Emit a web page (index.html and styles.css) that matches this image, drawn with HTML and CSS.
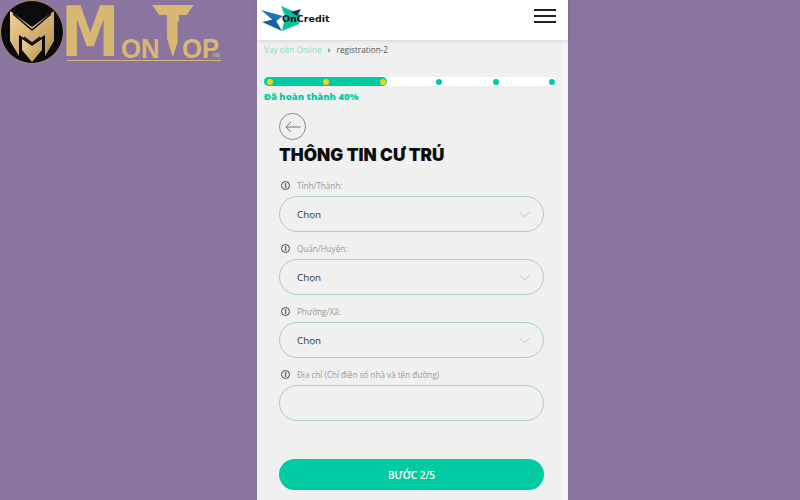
FILE: index.html
```html
<!DOCTYPE html>
<html lang="vi">
<head>
    <meta charset="UTF-8">
    <meta name="viewport" content="width=device-width, initial-scale=1.0">
    <title>OnCredit</title>
    <link rel="stylesheet" href="styles.css">
</head>
<body>

<!-- watermark over the page corner -->
<div class="brand">
    <svg class="brand-mark" width="65" height="65" viewBox="0 0 65 65">
        <defs>
            <linearGradient id="gold" x1="0" y1="0" x2="1" y2="1">
                <stop offset="0" stop-color="#f0d596"/>
                <stop offset="1" stop-color="#b98f4e"/>
            </linearGradient>
        </defs>
        <circle cx="32" cy="32" r="31.5" fill="#0b0a0c" stroke="#a58c68" stroke-width="1"/>
        <path d="M10 11 L32 27 L54 11 L54 41 L45 56 L45 35 L32 43 L19 35 L19 56 L10 41 Z" fill="url(#gold)"/>
        <path d="M13 14 L32 30 L51 14" fill="none" stroke="#0b0a0c" stroke-width="1.6"/>
        <path d="M22 39 L32 46 L42 39 L42 50 L32 62 L22 50 Z" fill="url(#gold)"/>
        <path d="M24 37 L32 43 L40 37" fill="none" stroke="#0b0a0c" stroke-width="1.2"/>
    </svg>
    <div class="brand-word">
        <span class="big-m">M</span><span class="small-w">ON</span><span class="big-t">T</span><span class="small-w">OP</span><span class="vn">VN</span>
    </div>
</div>

<div class="phone">
    <header class="top">
        <div class="logo">
            <svg width="42" height="32" viewBox="0 0 42 32">
                <polygon points="0,6 22,12 14,18" fill="#1b76b8"/>
                <polygon points="1,18 14,15 21,27" fill="#1560a0"/>
                <polygon points="20,2 39,10 38,20 21,27 24,12" fill="#07c39b"/>
                <polygon points="30,8 40,5 36,12" fill="#16324f"/>
            </svg>
            <span class="logo-text">OnCredit</span>
        </div>
        <div class="burger"><i></i><i></i><i></i></div>
    </header>

    <div class="content">
        <div class="crumbs">
            <span class="crumb-link">Vay tiền Online</span>
            <span class="crumb-sep">›</span>
            <span>registration-2</span>
        </div>

        <div class="progress">
            <div class="progress-fill" style="width: 42%"></div>
            <div class="dots">
                <i class="on"></i><i class="on"></i><i class="on"></i><i></i><i></i><i></i>
            </div>
        </div>
        <p class="progress-text">Đã hoàn thành 40%</p>

        <form class="form">
            <div class="back">
                <svg width="16" height="12" viewBox="0 0 16 12"><path d="M15.5 6H1M6 1L1 6l5 5" fill="none" stroke="#777" stroke-width="1"/></svg>
            </div>
            <h1 class="title">THÔNG TIN CƯ TRÚ</h1>

            <label class="field-label"><span class="info">i</span>Tỉnh/Thành:</label>
            <div class="field">Chọn
                <svg class="arrow" width="11" height="7" viewBox="0 0 11 7"><path d="M.5 1l5 5 5-5" fill="none" stroke="#a9d0c3" stroke-width="1"/></svg>
            </div>

            <label class="field-label"><span class="info">i</span>Quận/Huyện:</label>
            <div class="field">Chọn
                <svg class="arrow" width="11" height="7" viewBox="0 0 11 7"><path d="M.5 1l5 5 5-5" fill="none" stroke="#a9d0c3" stroke-width="1"/></svg>
            </div>

            <label class="field-label"><span class="info">i</span>Phường/Xã:</label>
            <div class="field">Chọn
                <svg class="arrow" width="11" height="7" viewBox="0 0 11 7"><path d="M.5 1l5 5 5-5" fill="none" stroke="#a9d0c3" stroke-width="1"/></svg>
            </div>

            <label class="field-label"><span class="info">i</span>Địa chỉ (Chỉ điền số nhà và tên đường)</label>
            <div class="field"></div>

            <button type="button" class="next">BƯỚC 2/5</button>
        </form>
    </div>
</div>

</body>
</html>
```

FILE: styles.css
```css
html, body {
    margin: 0;
    height: 500px;
    overflow: hidden;
}
body {
    background: #8a75a0;
    font-family: "Open Sans", Arial, sans-serif;
    display: flex;
}
.brand {
    position: absolute;
    left: 0;
    top: 0;
    display: flex;
    gap: 2px;
}
.brand-word {
    display: flex;
    align-items: flex-end;
    height: 60px;
    width: 154px;
    border-bottom: 1px solid #d8b678;
    font-family: "Liberation Sans", Arial, sans-serif;
    font-weight: bold;
    color: #d9b873;
    line-height: 1;
    white-space: nowrap;
}
.big-m {
    font-family: "DejaVu Sans", sans-serif;
    font-size: 70px;
    line-height: .8;
    margin: 0 -10px 0 -5.6px;
    transform: scaleX(.84);
    transform-origin: left bottom;
}
.big-t {
    font-family: "DejaVu Sans", sans-serif;
    font-size: 70px;
    line-height: .8;
    margin: 0 -14.3px 0 -14.4px;
    transform: scaleX(.9);
    clip-path: polygon(0 0, 100% 0, 80% 22%, 61% 32%, 61% 68%, 50% 95%, 39% 68%, 20% 22%);
}
.small-w {
    font-size: 28px;
    margin-bottom: -3px;
    transform: scaleX(.92);
    transform-origin: left bottom;
}
.vn {
    font-size: 5px;
    margin: 0 0 2px -10px;
}
.phone {
    margin-left: 257px;
    width: 311px;
    height: 500px;
    background: #f5f5f5;
    display: flex;
    flex-direction: column;
}
.top {
    height: 40px;
    flex: none;
    background: #fff;
    box-shadow: 0 1px 4px rgba(0, 0, 0, 0.12);
    display: flex;
    justify-content: space-between;
    align-items: center;
    padding: 0 12px 0 4px;
    position: relative;
}
.logo {
    display: flex;
    align-items: center;
}
.logo-text {
    font-family: "DejaVu Sans", sans-serif;
    font-weight: bold;
    font-size: 9.5px;
    color: #111;
    margin-left: -21px;
    margin-top: -3px;
    position: relative;
}
.burger {
    width: 22px;
    display: flex;
    flex-direction: column;
    gap: 4.5px;
    margin-bottom: 8px;
}
.burger i {
    display: block;
    height: 1.5px;
    background: #222;
}
.content {
    flex: 1;
    width: 305px;
    background: #f0f0f0;
    padding: 0 0 0 7px;
    box-sizing: border-box;
}
.crumbs {
    font-size: 8.2px;
    color: #555;
    height: 12px;
    line-height: 12px;
    margin-top: 4px;
    display: flex;
    gap: 6px;
}
.crumb-link {
    color: #8fdcc8;
}
.crumb-sep {
    color: #3a8f7c;
    font-weight: bold;
}
.progress {
    width: 292px;
    height: 9px;
    background: #fff;
    border-radius: 5px;
    margin-top: 21px;
    position: relative;
}
.progress-fill {
    height: 100%;
    background: #00cba3;
    border-radius: 5px;
}
.dots {
    position: absolute;
    inset: 0;
    padding: 0 1px 0 3px;
    display: flex;
    justify-content: space-between;
    align-items: center;
}
.dots i {
    width: 6px;
    height: 6px;
    border-radius: 50%;
    background: #00cba3;
}
.dots i.on {
    background: #ffcf0d;
}
.progress-text {
    margin: 4px 0 0;
    font-size: 9.5px;
    line-height: 13px;
    font-weight: 800;
    color: #00cba3;
}
.form {
    padding-left: 15px;
    width: 265px;
}
.back {
    width: 25px;
    height: 25px;
    margin-top: 10px;
    border: 1px solid #888;
    border-radius: 50%;
    display: flex;
    align-items: center;
    justify-content: center;
}
.title {
    margin: 6px 0 0;
    font-family: Inter, Arial, sans-serif;
    font-size: 17.2px;
    line-height: 18px;
    font-weight: 900;
    color: #0c0c0c;
    white-space: nowrap;
}
.field-label {
    display: flex;
    align-items: center;
    height: 12px;
    margin-top: 10px;
    margin-bottom: 5px;
    padding-left: 2px;
    font-size: 8.1px;
    color: #999;
}
.field-label:first-of-type {
    margin-top: 15px;
}
.info {
    width: 7px;
    height: 7px;
    border: 1px solid #444;
    border-radius: 50%;
    font-size: 7px;
    line-height: 7px;
    font-weight: bold;
    color: #444;
    text-align: center;
    margin-right: 7px;
}
.field {
    height: 36px;
    box-sizing: border-box;
    border: 1px solid #a6cfc0;
    border-radius: 18px;
    padding: 0 13px 0 17px;
    font-size: 9.8px;
    color: #333;
    display: flex;
    align-items: center;
    justify-content: space-between;
}
.next {
    display: block;
    width: 100%;
    height: 31px;
    margin-top: 38px;
    border: none;
    border-radius: 16px;
    background: #00cba3;
    color: #fff;
    font-family: "Open Sans", Arial, sans-serif;
    font-size: 10px;
    font-weight: 600;
}
```
